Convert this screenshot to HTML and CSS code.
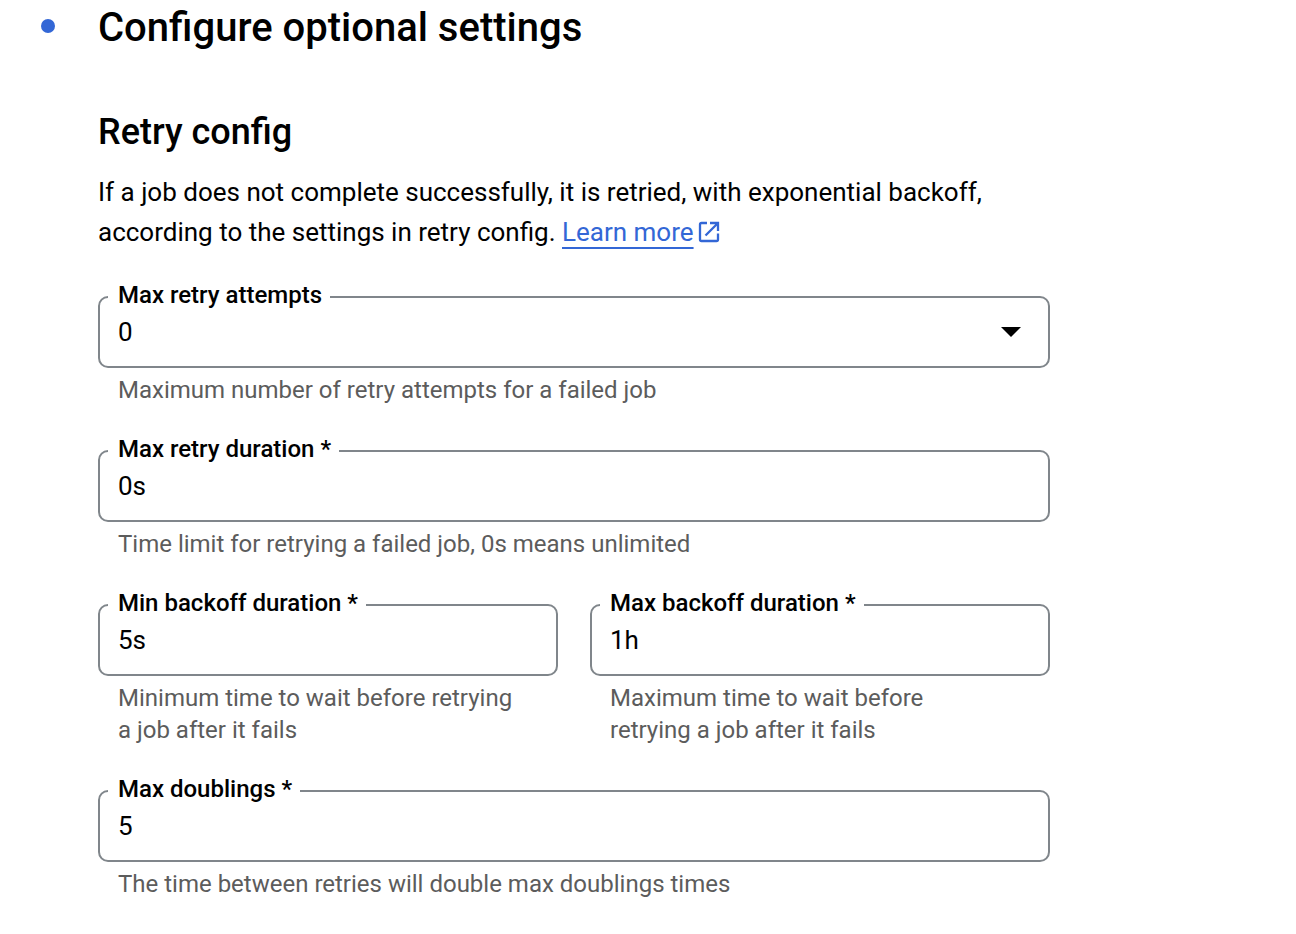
FILE: index.html
```html
<!DOCTYPE html>
<html lang="en">
<head>
<meta charset="utf-8">
<meta name="viewport" content="width=device-width, initial-scale=1">
<title>Configure optional settings</title>
<link rel="stylesheet" href="styles.css">
</head>
<body>
<main class="step">
  <span class="step-dot" aria-hidden="true"></span>
  <form class="step-body">
    <h1 class="step-title">Configure optional settings</h1>
    <h2 class="section-title">Retry config</h2>
    <p class="intro">If a job does not complete successfully, it is retried, with exponential backoff, according to the settings in retry config. <a class="link" href="#">Learn more<svg class="link-icon" viewBox="0 0 22 22" aria-hidden="true"><path d="M9 2H3.500Q2 2 2 3.500V18.500Q2 20 3.500 20H18.500Q20 20 20 18.500V12.500M12 2H20V10M20 2L7.500 14.500"/></svg></a></p>

    <div class="field">
      <fieldset class="outline">
        <legend class="legend"><label for="attempts">Max retry attempts</label></legend>
        <div class="select-row">
          <select class="control" id="attempts"><option>0</option></select>
          <svg class="arrow" viewBox="0 0 22 10" aria-hidden="true"><path d="M1 0H21L11 10Z"/></svg>
        </div>
      </fieldset>
      <p class="hint">Maximum number of retry attempts for a failed job</p>
    </div>

    <div class="field">
      <fieldset class="outline">
        <legend class="legend"><label for="duration">Max retry duration *</label></legend>
        <input class="control" id="duration" type="text" value="0s">
      </fieldset>
      <p class="hint">Time limit for retrying a failed job, 0s means unlimited</p>
    </div>

    <div class="pair">
      <div class="field">
        <fieldset class="outline">
          <legend class="legend"><label for="min-backoff">Min backoff duration *</label></legend>
          <input class="control" id="min-backoff" type="text" value="5s">
        </fieldset>
        <p class="hint">Minimum time to wait before retrying a job after it fails</p>
      </div>
      <div class="field">
        <fieldset class="outline">
          <legend class="legend"><label for="max-backoff">Max backoff duration *</label></legend>
          <input class="control" id="max-backoff" type="text" value="1h">
        </fieldset>
        <p class="hint">Maximum time to wait before retrying a job after it fails</p>
      </div>
    </div>

    <div class="field">
      <fieldset class="outline">
        <legend class="legend"><label for="doublings">Max doublings *</label></legend>
        <input class="control" id="doublings" type="text" value="5">
      </fieldset>
      <p class="hint">The time between retries will double max doublings times</p>
    </div>
  </form>
</main>
</body>
</html>
```
FILE: styles.css
```css
* {
  box-sizing: border-box;
}

body {
  margin: 0;
  background: #fff;
  color: #000;
  font-family: Roboto, "Liberation Sans", sans-serif;
}

.step {
  display: flex;
  gap: 43px;
  padding: 4px 40px 20px 41px;
}

.step-dot {
  flex: none;
  width: 14px;
  height: 14px;
  margin-top: 15px;
  border-radius: 50%;
  background: #3367d6;
}

.step-body {
  flex: 1;
  max-width: 952px;
}

.step-title {
  margin: 0;
  font-size: 40px;
  line-height: 48px;
  font-weight: 500;
}

.section-title {
  margin: 60px 0 0;
  font-size: 36px;
  line-height: 40px;
  font-weight: 500;
}

.intro {
  margin: 20px 0 28px;
  font-size: 26px;
  line-height: 40px;
}

.link {
  color: #3367d6;
  text-decoration: underline 2px;
  text-underline-offset: 6px;
}

.link-icon {
  width: 22px;
  height: 22px;
  margin-left: 4px;
  vertical-align: -2px;
  fill: none;
  stroke: currentColor;
  stroke-width: 2.3;
}

.field {
  min-width: 0;
  margin-bottom: 28px;
}

.outline {
  min-width: 0;
  height: 88px;
  margin: 0;
  padding: 0 8px;
  border: 2px solid #80868b;
  border-radius: 10px;
}

.legend {
  padding: 0 8px 4px 10px;
  font-size: 24px;
  line-height: 30px;
  font-weight: 500;
}

.select-row {
  display: grid;
  align-items: center;
}

.select-row > * {
  grid-area: 1 / 1;
}

.control {
  width: 100%;
  height: 36px;
  padding: 0 10px;
  border: 0;
  outline: 0;
  appearance: none;
  background: transparent;
  color: #000;
  font: 26px/36px Roboto, "Liberation Sans", sans-serif;
}

.arrow {
  width: 22px;
  height: 10px;
  margin-right: 18px;
  justify-self: end;
  pointer-events: none;
}

.hint {
  margin: 6px 44px 0 20px;
  color: #5c5c5c;
  font-size: 24px;
  line-height: 32px;
}

.pair {
  display: grid;
  grid-template-columns: 1fr 1fr;
  gap: 32px;
}
```
